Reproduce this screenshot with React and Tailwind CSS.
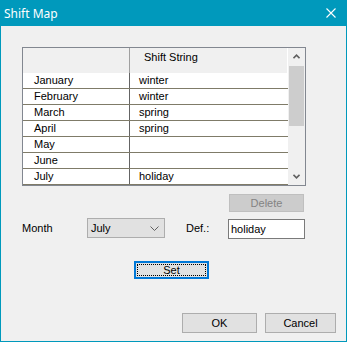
import React from 'react';

const rows = [
    ['January', 'winter'],
    ['February', 'winter'],
    ['March', 'spring'],
    ['April', 'spring'],
    ['May', ''],
    ['June', ''],
    ['July', 'holiday'],
];

// ICONS
const CloseIcon = () => <svg width="10" height="10" viewBox="0 0 10 10"><path d="M0.5 0.5L9.5 9.5M9.5 0.5L0.5 9.5" stroke="#fff" strokeWidth="1.1" /></svg>;
const UpIcon = () => <svg width="7" height="5" viewBox="0 0 7 5"><path d="M0.5 4.2L3.5 1.2L6.5 4.2" fill="none" stroke="#606060" strokeWidth="1.6" /></svg>;
const DownIcon = () => <svg width="7" height="5" viewBox="0 0 7 5"><path d="M0.5 0.8L3.5 3.8L6.5 0.8" fill="none" stroke="#606060" strokeWidth="1.6" /></svg>;
const ComboIcon = () => <svg width="9" height="5" viewBox="0 0 9 5"><path d="M0.5 0.5L4.5 4.5L8.5 0.5" fill="none" stroke="#606060" strokeWidth="1" /></svg>;

const App = () => {
    return (
        <div className="w-[347px] h-[342px] bg-[#f0f0f0] border border-t-0 border-[#0099bc] flex flex-col font-['Liberation_Sans',Arial,sans-serif] text-[11px] text-black leading-[13px]">
            <div className="h-[26px] bg-[#0099bc] flex items-center justify-between pl-[3px] pr-[10px]">
                <span className="text-white text-[12px] font-['Noto_Sans',sans-serif]">Shift Map</span>
                <CloseIcon />
            </div>

            <div className="flex-1 pl-[21px] pt-[21px] flex flex-col">
                {/* list view */}
                <div className="w-[284px] h-[139px] border border-[#828790] bg-white flex">
                    <div className="w-[265px] flex flex-col">
                        <div className="h-[25px] flex bg-[#f0f0f0] border-r border-white">
                            <div className="w-[107px] border-r border-[#a0a0a0]" />
                            <div className="pl-[14px] pt-[3px]">Shift String</div>
                        </div>
                        {rows.map(([month, value]) => (
                            <div key={month} className="h-[16px] flex border-b border-[#7f7b68]">
                                <div className="w-[107px] border-r border-[#646464] pl-[11px] flex items-center">{month}</div>
                                <div className="pl-[9px] flex items-center">{value}</div>
                            </div>
                        ))}
                    </div>
                    <div className="w-[17px] bg-[#f0f0f0] flex flex-col">
                        <div className="h-[17px] flex items-center justify-center"><UpIcon /></div>
                        <div className="mt-px mx-px h-[60px] bg-[#cdcdcd]" />
                        <div className="flex-1" />
                        <div className="h-[17px] flex items-center justify-center"><DownIcon /></div>
                    </div>
                </div>

                <div className="mt-[8px] ml-[207px] w-[75px] h-[18px] bg-[#cccccc] border border-[#bfbfbf] text-[#838383] flex items-center justify-center">Delete</div>

                <div className="mt-[6px] h-[20px] flex items-center">
                    <span className="w-[65px]">Month</span>
                    <div className="w-[78px] h-[20px] bg-[#e1e1e1] border border-[#adadad] pl-[3px] pr-[5px] flex items-center justify-between">
                        <span>July</span>
                        <ComboIcon />
                    </div>
                    <span className="ml-[21px] w-[42px]">Def.:</span>
                    <div className="w-[77px] h-[20px] mt-[2px] bg-white border border-[#7a7a7a] pl-[2px] flex items-center">holiday</div>
                </div>

                <div className="mt-[23px] ml-[112px] w-[75px] h-[18px] bg-[#e1e1e1] border-2 border-[#0078d7] p-px">
                    <div className="w-full h-full border border-dotted border-black flex items-center justify-center">Set</div>
                </div>

                <div className="mt-[34px] ml-[160px] flex gap-[8px]">
                    <button className="w-[75px] h-[20px] bg-[#e1e1e1] border border-[#adadad] flex items-center justify-center">OK</button>
                    <button className="w-[71px] h-[20px] bg-[#e1e1e1] border border-[#adadad] flex items-center justify-center">Cancel</button>
                </div>
            </div>
        </div>
    );
};

export default App;
